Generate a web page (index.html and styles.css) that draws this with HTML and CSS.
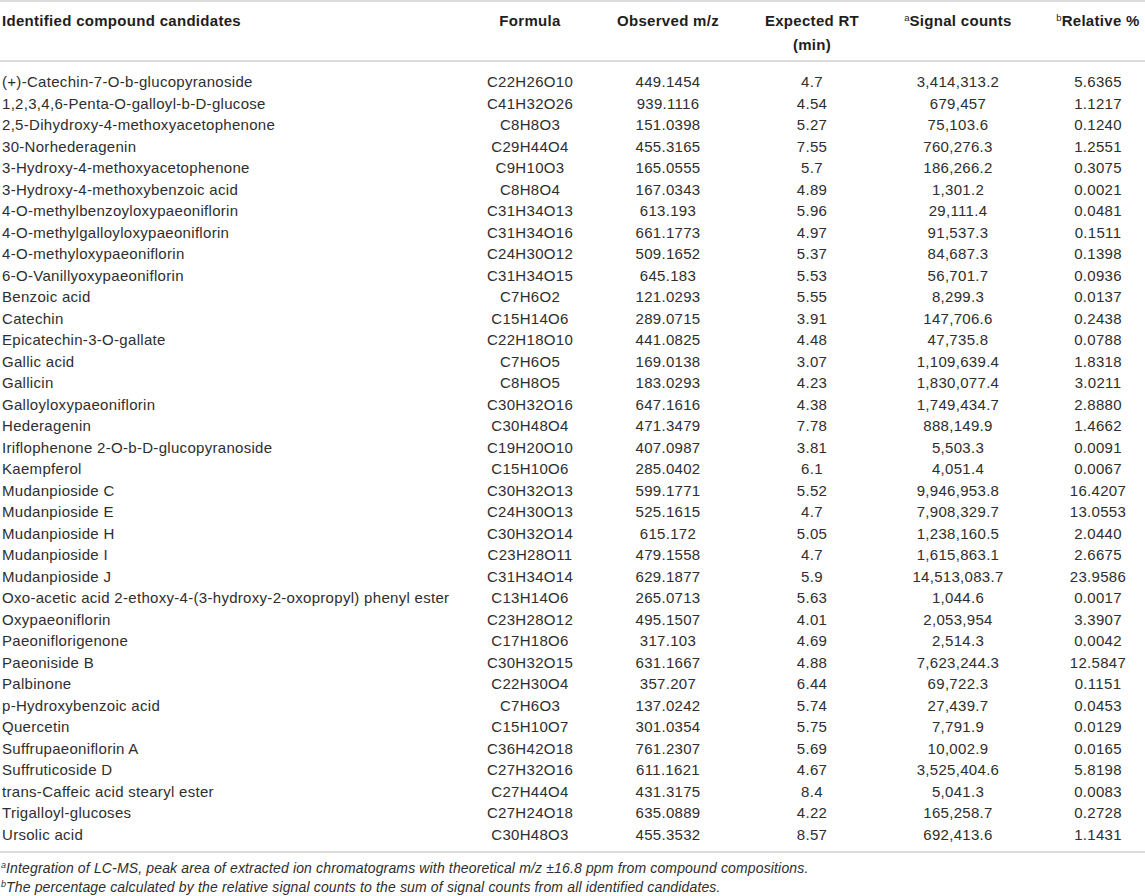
FILE: index.html
```html
<!DOCTYPE html>
<html lang="en">

<head>
    <meta charset="UTF-8">
    <meta name="viewport" content="width=device-width, initial-scale=1.0">
    <title>Identified compound candidates</title>
    <link rel="stylesheet" href="styles.css">
</head>

<body>
    <div class="table-wrap">
        <table class="compounds">
            <colgroup>
                <col class="col-name">
                <col class="col-formula">
                <col class="col-mz">
                <col class="col-rt">
                <col class="col-signal">
                <col class="col-rel">
            </colgroup>
            <thead>
                <tr>
                    <th class="name">Identified compound candidates</th>
                    <th>Formula</th>
                    <th>Observed m/z</th>
                    <th>Expected RT<br>(min)</th>
                    <th><sup>a</sup>Signal counts</th>
                    <th><sup>b</sup>Relative %</th>
                </tr>
            </thead>
            <tbody>
                <tr><td class="name">(+)-Catechin-7-O-b-glucopyranoside</td><td>C22H26O10</td><td>449.1454</td><td>4.7</td><td>3,414,313.2</td><td>5.6365</td></tr>
                <tr><td class="name">1,2,3,4,6-Penta-O-galloyl-b-D-glucose</td><td>C41H32O26</td><td>939.1116</td><td>4.54</td><td>679,457</td><td>1.1217</td></tr>
                <tr><td class="name">2,5-Dihydroxy-4-methoxyacetophenone</td><td>C8H8O3</td><td>151.0398</td><td>5.27</td><td>75,103.6</td><td>0.1240</td></tr>
                <tr><td class="name">30-Norhederagenin</td><td>C29H44O4</td><td>455.3165</td><td>7.55</td><td>760,276.3</td><td>1.2551</td></tr>
                <tr><td class="name">3-Hydroxy-4-methoxyacetophenone</td><td>C9H10O3</td><td>165.0555</td><td>5.7</td><td>186,266.2</td><td>0.3075</td></tr>
                <tr><td class="name">3-Hydroxy-4-methoxybenzoic acid</td><td>C8H8O4</td><td>167.0343</td><td>4.89</td><td>1,301.2</td><td>0.0021</td></tr>
                <tr><td class="name">4-O-methylbenzoyloxypaeoniflorin</td><td>C31H34O13</td><td>613.193</td><td>5.96</td><td>29,111.4</td><td>0.0481</td></tr>
                <tr><td class="name">4-O-methylgalloyloxypaeoniflorin</td><td>C31H34O16</td><td>661.1773</td><td>4.97</td><td>91,537.3</td><td>0.1511</td></tr>
                <tr><td class="name">4-O-methyloxypaeoniflorin</td><td>C24H30O12</td><td>509.1652</td><td>5.37</td><td>84,687.3</td><td>0.1398</td></tr>
                <tr><td class="name">6-O-Vanillyoxypaeoniflorin</td><td>C31H34O15</td><td>645.183</td><td>5.53</td><td>56,701.7</td><td>0.0936</td></tr>
                <tr><td class="name">Benzoic acid</td><td>C7H6O2</td><td>121.0293</td><td>5.55</td><td>8,299.3</td><td>0.0137</td></tr>
                <tr><td class="name">Catechin</td><td>C15H14O6</td><td>289.0715</td><td>3.91</td><td>147,706.6</td><td>0.2438</td></tr>
                <tr><td class="name">Epicatechin-3-O-gallate</td><td>C22H18O10</td><td>441.0825</td><td>4.48</td><td>47,735.8</td><td>0.0788</td></tr>
                <tr><td class="name">Gallic acid</td><td>C7H6O5</td><td>169.0138</td><td>3.07</td><td>1,109,639.4</td><td>1.8318</td></tr>
                <tr><td class="name">Gallicin</td><td>C8H8O5</td><td>183.0293</td><td>4.23</td><td>1,830,077.4</td><td>3.0211</td></tr>
                <tr><td class="name">Galloyloxypaeoniflorin</td><td>C30H32O16</td><td>647.1616</td><td>4.38</td><td>1,749,434.7</td><td>2.8880</td></tr>
                <tr><td class="name">Hederagenin</td><td>C30H48O4</td><td>471.3479</td><td>7.78</td><td>888,149.9</td><td>1.4662</td></tr>
                <tr><td class="name">Iriflophenone 2-O-b-D-glucopyranoside</td><td>C19H20O10</td><td>407.0987</td><td>3.81</td><td>5,503.3</td><td>0.0091</td></tr>
                <tr><td class="name">Kaempferol</td><td>C15H10O6</td><td>285.0402</td><td>6.1</td><td>4,051.4</td><td>0.0067</td></tr>
                <tr><td class="name">Mudanpioside C</td><td>C30H32O13</td><td>599.1771</td><td>5.52</td><td>9,946,953.8</td><td>16.4207</td></tr>
                <tr><td class="name">Mudanpioside E</td><td>C24H30O13</td><td>525.1615</td><td>4.7</td><td>7,908,329.7</td><td>13.0553</td></tr>
                <tr><td class="name">Mudanpioside H</td><td>C30H32O14</td><td>615.172</td><td>5.05</td><td>1,238,160.5</td><td>2.0440</td></tr>
                <tr><td class="name">Mudanpioside I</td><td>C23H28O11</td><td>479.1558</td><td>4.7</td><td>1,615,863.1</td><td>2.6675</td></tr>
                <tr><td class="name">Mudanpioside J</td><td>C31H34O14</td><td>629.1877</td><td>5.9</td><td>14,513,083.7</td><td>23.9586</td></tr>
                <tr><td class="name">Oxo-acetic acid 2-ethoxy-4-(3-hydroxy-2-oxopropyl) phenyl ester</td><td>C13H14O6</td><td>265.0713</td><td>5.63</td><td>1,044.6</td><td>0.0017</td></tr>
                <tr><td class="name">Oxypaeoniflorin</td><td>C23H28O12</td><td>495.1507</td><td>4.01</td><td>2,053,954</td><td>3.3907</td></tr>
                <tr><td class="name">Paeoniflorigenone</td><td>C17H18O6</td><td>317.103</td><td>4.69</td><td>2,514.3</td><td>0.0042</td></tr>
                <tr><td class="name">Paeoniside B</td><td>C30H32O15</td><td>631.1667</td><td>4.88</td><td>7,623,244.3</td><td>12.5847</td></tr>
                <tr><td class="name">Palbinone</td><td>C22H30O4</td><td>357.207</td><td>6.44</td><td>69,722.3</td><td>0.1151</td></tr>
                <tr><td class="name">p-Hydroxybenzoic acid</td><td>C7H6O3</td><td>137.0242</td><td>5.74</td><td>27,439.7</td><td>0.0453</td></tr>
                <tr><td class="name">Quercetin</td><td>C15H10O7</td><td>301.0354</td><td>5.75</td><td>7,791.9</td><td>0.0129</td></tr>
                <tr><td class="name">Suffrupaeoniflorin A</td><td>C36H42O18</td><td>761.2307</td><td>5.69</td><td>10,002.9</td><td>0.0165</td></tr>
                <tr><td class="name">Suffruticoside D</td><td>C27H32O16</td><td>611.1621</td><td>4.67</td><td>3,525,404.6</td><td>5.8198</td></tr>
                <tr><td class="name">trans-Caffeic acid stearyl ester</td><td>C27H44O4</td><td>431.3175</td><td>8.4</td><td>5,041.3</td><td>0.0083</td></tr>
                <tr><td class="name">Trigalloyl-glucoses</td><td>C27H24O18</td><td>635.0889</td><td>4.22</td><td>165,258.7</td><td>0.2728</td></tr>
                <tr><td class="name">Ursolic acid</td><td>C30H48O3</td><td>455.3532</td><td>8.57</td><td>692,413.6</td><td>1.1431</td></tr>
            </tbody>
        </table>

        <div class="footnotes">
            <p><sup>a</sup>Integration of LC-MS, peak area of extracted ion chromatograms with theoretical m/z ±16.8 ppm from compound compositions.</p>
            <p><sup>b</sup>The percentage calculated by the relative signal counts to the sum of signal counts from all identified candidates.</p>
        </div>
    </div>
</body>

</html>
```

FILE: styles.css
```css
* {
    margin: 0;
    padding: 0;
    box-sizing: border-box;
}
body {
    background-color: #ffffff;
    color: #2e2e2e;
    font-family: 'Liberation Sans', Arial, Helvetica, sans-serif;
}
.table-wrap {
    width: 1145px;
}
.compounds {
    width: 1145px;
    table-layout: fixed;
    border-collapse: collapse;
    font-size: 15px;
    letter-spacing: 0.3px;
}
.col-name { width: 483px; }
.col-formula { width: 94px; }
.col-mz { width: 182px; }
.col-rt { width: 106px; }
.col-signal { width: 186px; }
.col-rel { width: 94px; }

.compounds th,
.compounds td {
    text-align: center;
    white-space: nowrap;
    overflow: visible;
}
.compounds .name {
    text-align: left;
    padding-left: 2px;
}
.compounds thead tr {
    border-top: 2px solid #dcdcdc;
    border-bottom: 2px solid #dcdcdc;
}
.compounds th {
    font-weight: bold;
    color: #1e1e1e;
    vertical-align: top;
    line-height: 24px;
    padding-top: 7px;
    padding-bottom: 3px;
}
.compounds sup {
    font-size: 9.5px;
    font-weight: normal;
    vertical-align: 5px;
    line-height: 0;
    letter-spacing: 0;
}
.compounds td {
    line-height: 21.5px;
    height: 21.5px;
}
.compounds tbody tr:first-child td {
    padding-top: 9px;
    height: 30.5px;
}
.compounds tbody tr:last-child td {
    padding-bottom: 6px;
    height: 27.5px;
}
.compounds tbody tr:last-child {
    border-bottom: 2px solid #dcdcdc;
}
.footnotes {
    padding-top: 6px;
    padding-left: 1px;
    font-size: 14px;
    font-style: italic;
    letter-spacing: 0.15px;
    line-height: 19px;
    color: #2e2e2e;
}
.footnotes sup {
    font-size: 9px;
    vertical-align: 5px;
    line-height: 0;
    letter-spacing: 0;
}
```
